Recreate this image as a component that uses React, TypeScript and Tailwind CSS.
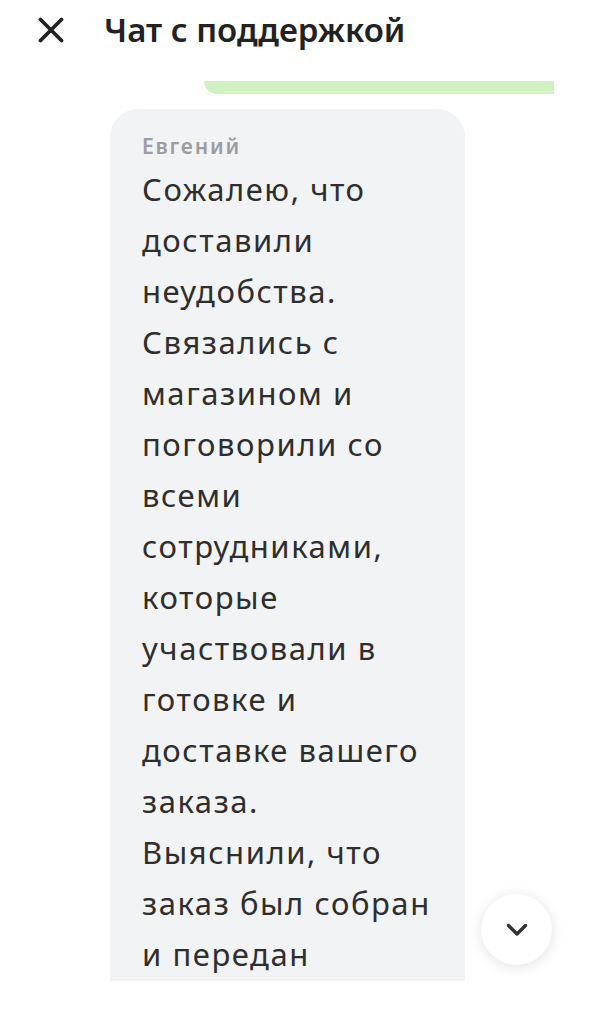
const lines = [
  'Сожалею, что',
  'доставили',
  'неудобства.',
  'Связались с',
  'магазином и',
  'поговорили со',
  'всеми',
  'сотрудниками,',
  'которые',
  'участвовали в',
  'готовке и',
  'доставке вашего',
  'заказа.',
  'Выяснили, что',
  'заказ был собран',
  'и передан',
];

const App = () => {
  return (
    <div className="relative h-[1020px] w-[591px] overflow-hidden bg-white font-['Noto_Sans',sans-serif] text-[#2b2b2b]">
      {/* Header */}
      <div className="flex h-[60px] items-center pl-[38px]">
        <svg width="26" height="26" viewBox="0 0 26 26" className="text-[#222]">
          <path d="M2.5 2.5 23.5 23.5M23.5 2.5 2.5 23.5" stroke="currentColor" strokeWidth="3.8" strokeLinecap="round" />
        </svg>
        <h1 className="ml-[40px] text-[33px] font-semibold tracking-[0px] text-[#222]">Чат с поддержкой</h1>
      </div>

      {/* Message list, clipped at the composer */}
      <div className="h-[921px] overflow-hidden">
        {/* Previous (own) message, cut off at top */}
        <div className="flex justify-end pr-[37px] pt-[21px]">
          <div className="relative h-[13px] w-[350px] rounded-bl-[22px] bg-[#d1f1c2]">
            <div className="absolute bottom-[2px] left-[20px] right-0 h-px bg-[#def7d2]" />
          </div>
        </div>

        {/* Support message */}
        <div className="pl-[110px] pt-[15px]">
          <div className="w-[355px] rounded-t-[28px] bg-[#f2f3f5] pl-[32px] pr-[12px] pt-[22px] pb-[20px]">
            <div className="text-[21px] font-semibold leading-[30px] tracking-[1.8px] text-[#9c9ca2]">Евгений</div>
            <div className="mt-[3px] text-[31px] leading-[51px] tracking-[1.55px] text-[#2e2e2e]">
              {lines.map((l, i) => (
                <div key={i} className="whitespace-nowrap">{l}</div>
              ))}
            </div>
          </div>
        </div>
      </div>

      {/* Scroll down button */}
      <button className="absolute left-[481px] top-[894px] flex h-[71px] w-[71px] items-center justify-center rounded-full bg-white shadow-[0_2px_14px_rgba(0,0,0,0.12)]">
        <svg width="22" height="14" viewBox="0 0 22 14" className="text-[#333]">
          <path d="M2.5 2.5 11 11 19.5 2.5" fill="none" stroke="currentColor" strokeWidth="3.4" strokeLinecap="round" strokeLinejoin="round" />
        </svg>
      </button>
    </div>
  );
};

export default App;
